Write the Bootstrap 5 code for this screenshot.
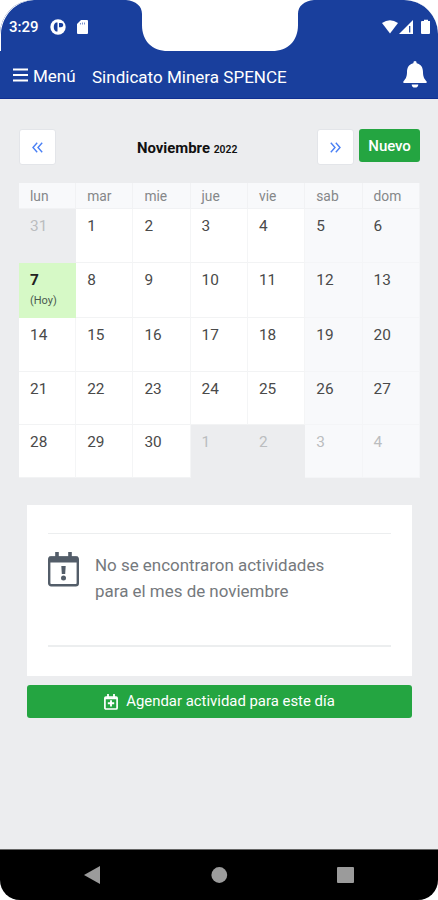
<!DOCTYPE html>
<html lang="es">
<head>
<meta charset="utf-8">
<meta name="viewport" content="width=device-width, initial-scale=1">
<title>Sindicato Minera SPENCE</title>
<link href="https://cdn.jsdelivr.net/npm/bootstrap@5.3.0/dist/css/bootstrap.min.css" rel="stylesheet">
<style>
body{font-family:Roboto,sans-serif;background:#fff;margin:0}
.phone{width:438px;height:900px;background:#ecedef;border-radius:34px 34px 20px 20px;font-size:16px}
.blue{background:#193f9d;color:#fff}
.top-shape{left:0;top:0}
.status{height:51px;padding:3px 7px 0 9px}
.clock{font-size:15px;font-weight:500;line-height:20px;width:41px}
.bar{height:48px;padding:0 11px 0 13px;border-bottom:1px solid #102f92;line-height:22px}
.menu-txt{font-size:17px;margin-left:5px;width:59px;padding-top:2px}
.title-txt{font-size:17.05px;padding-top:5px}
.tools{margin:30px 18px 0 19px;height:54px}
.pager{width:37px;height:36px;background:#fff;border:1px solid #e3e5e9;border-radius:3px;padding:0;color:#4a80f5}
.month{font-size:14.9px;font-weight:700;color:#111;line-height:36px;width:103px;margin-left:81px;margin-right:77px;padding-top:1px}
.year{font-size:10.4px;font-weight:600}
.btn-go{background:#24a541;color:#fff;border-radius:3px;border:0;padding:0}
.btn-new{width:61px;height:33px;font-size:15px;font-weight:500;letter-spacing:-.1px;padding-top:1px}
.cal{width:401px;margin-left:19px;display:grid;grid-template-columns:repeat(3,57.2px) 57.4px repeat(3,57.3px);grid-template-rows:26px 54px 55px 54px 53px 53px}
.cal>div{background:#fff;border-right:1px solid #f4f5f6;border-bottom:1px solid #f2f3f4;padding:6px 0 0 11px;font-size:15.4px;line-height:22px;color:#4a4a4a}
.cal>.wd{background:#f8f9fb;color:#858789;font-size:13.8px;padding-top:2px;border-color:#f1f2f4}
.cal>.we{background:#f8f9fb;border-color:#f4f5f7}
.cal>.out{color:#bbbdbf}
.cal>.off{background:#ecedef;border-color:#ecedef}
.cal>.now{background:#d6f9c6;color:#222;border-color:#d6f9c6}
.hoy{font-size:11px;line-height:20px;color:#4b5a50}
.panel-box{margin:27px 26px 0 27px;height:171px;background:#fff;padding:28px 21px}
.panel-in{border-top:1px solid #eceeef;border-bottom:2px solid #eceeef;height:114px;padding-top:18px}
.msg{font-size:16.95px;line-height:26px;color:#75797d;margin-left:16px}
.btn-wide{margin:9px 26px 0 27px;height:33px;font-size:14.9px}
.navkeys{height:51px;background:#000;border-top:1px solid #666}
</style>
</head>
<body>
<div class="phone position-relative overflow-hidden d-flex flex-column">
  <header class="blue">
    <svg class="top-shape position-absolute" width="438" height="52" viewBox="0 0 438 52"><path fill="#fff" d="M126 0C136 1 142 6 142 14V25C142 41 152 51 168 51H272C288 51 298 41 298 25V14C298 6 304 1 314 0Z"/><path fill="#fff" d="M0 0H34C16 1 2 15 1 34V51H0ZM438 0H408C425 3 436 15 438 30Z"/></svg>
    <div class="status d-flex align-items-center position-relative">
      <span class="clock">3:29</span>
      <svg width="16" height="16" viewBox="0 0 16 16"><circle cx="8" cy="8" r="7.7" fill="#fff"/><path d="M7.500 3.500v9H6C3 11 3 5 6 3.500zM9 4h2.200a2.100 2.100 0 0 1 0 4.200H9z" fill="#193f9d"/></svg>
      <svg class="ms-2" width="16" height="16" viewBox="0 0 16 16"><path d="M7 1h6q1 0 1 1v12q0 1-1 1H4q-1 0-1-1V5z" fill="#fff"/><path d="M6.500 4v1.500M8.500 3.500v2M10.500 3.500v2" stroke="#7890cc" stroke-width="1"/></svg>
      <svg class="ms-auto" width="50" height="18" viewBox="0 0 50 18"><path d="M1 5Q9-.5 17 5L9 15.500z" fill="#fff"/><path d="M32 2V16H18z" fill="#fff"/><path d="M28.700 8v6.500" stroke="#193f9d" stroke-width="1.200"/><path d="M41 3h2V1.800h4V3h2v12q0 1-1 1h-7q-1 0-1-1V4q0-1 1-1z" fill="#fff"/></svg>
    </div>
    <nav class="bar d-flex align-items-center">
      <svg width="15" height="16" viewBox="0 0 15 16"><path d="M0 2.500h15M0 8h15M0 13.500h15" stroke="#fff" stroke-width="1.900"/></svg>
      <span class="menu-txt">Menú</span>
      <span class="title-txt text-nowrap">Sindicato Minera SPENCE</span>
      <svg class="ms-auto" width="24" height="27" viewBox="0 0 24 27"><path fill="#fff" d="M12 0q1.700 0 1.700 2.200C18 3.200 20 6.500 20 11c0 5 1.500 7 3.500 9.300Q24.200 22 22.500 22h-21Q-.2 22 .5 20.300C2.500 18 4 16 4 11c0-4.500 2-7.800 6.300-8.800Q10.300 0 12 0zM8.700 23.400h6.600a3.300 3.100 0 0 1-6.600 0z"/></svg>
    </nav>
  </header>
  <main class="flex-grow-1">
    <div class="tools d-flex align-items-start">
      <button class="pager d-flex align-items-center justify-content-center" aria-label="Anterior"><svg width="11" height="11" viewBox="0 0 11 11" fill="none" stroke="currentColor" stroke-width="1.400"><path d="M5.200.8L1 5.500l4.200 4.700M10.200.8L6 5.500l4.200 4.700"/></svg></button>
      <div class="month text-nowrap">Noviembre <span class="year">2022</span></div>
      <button class="pager d-flex align-items-center justify-content-center" aria-label="Siguiente"><svg width="11" height="11" viewBox="0 0 11 11" fill="none" stroke="currentColor" stroke-width="1.400"><path d="M.8.8L5 5.500.8 10.200M5.800.8L10 5.500 5.800 10.200"/></svg></button>
      <button class="btn-go btn-new ms-auto">Nuevo</button>
    </div>
    <div class="cal">
      <div class="wd">lun</div><div class="wd">mar</div><div class="wd">mie</div><div class="wd">jue</div><div class="wd">vie</div><div class="wd">sab</div><div class="wd">dom</div>
      <div class="out off">31</div><div>1</div><div>2</div><div>3</div><div>4</div><div class="we">5</div><div class="we">6</div>
      <div class="now"><b>7</b><div class="hoy">(Hoy)</div></div><div>8</div><div>9</div><div>10</div><div>11</div><div class="we">12</div><div class="we">13</div>
      <div>14</div><div>15</div><div>16</div><div>17</div><div>18</div><div class="we">19</div><div class="we">20</div>
      <div>21</div><div>22</div><div>23</div><div>24</div><div>25</div><div class="we">26</div><div class="we">27</div>
      <div>28</div><div>29</div><div>30</div><div class="out off">1</div><div class="out off">2</div><div class="out we">3</div><div class="out we">4</div>
    </div>
    <section class="panel-box">
      <div class="panel-in d-flex align-items-start">
        <svg width="31" height="35" viewBox="0 0 31 35"><path d="M9 0v6M22 0v6" stroke="#535d69" stroke-width="3.600"/><rect x="1.200" y="5.500" width="28.600" height="27.800" rx="2" fill="#fff" stroke="#535d69" stroke-width="2.400"/><path d="M1.200 4.500h28.600v6H1.200z" fill="#535d69"/><path d="M13.300 14h4.400l-.5 8h-3.400z" fill="#535d69"/><circle cx="15.500" cy="26" r="2.500" fill="#535d69"/></svg>
        <div class="msg text-nowrap">No se encontraron actividades<br>para el mes de noviembre</div>
      </div>
    </section>
    <div class="d-grid"><button class="btn-go btn-wide d-flex align-items-center justify-content-center"><svg class="me-2" width="14" height="16" viewBox="0 0 14 16"><path d="M4 0v4M10 0v4" stroke="#fff" stroke-width="1.800"/><rect x=".9" y="3" width="12.200" height="12" rx="1" fill="none" stroke="#fff" stroke-width="1.700"/><path d="M1 4.300h12M3.800 9.300h6.400M7 6.200v6.200" stroke="#fff" stroke-width="1.900"/></svg><span>Agendar actividad para este día</span></button></div>
  </main>
  <footer class="navkeys">
    <svg class="d-block" width="438" height="50" viewBox="0 850 438 50" fill="#9b9b9b"><path d="M84 875l16-9v18z"/><circle cx="219.300" cy="875" r="7.900"/><rect x="337" y="867" width="17" height="16" rx="1"/></svg>
  </footer>
</div>
<script src="https://cdn.jsdelivr.net/npm/bootstrap@5.3.0/dist/js/bootstrap.bundle.min.js"></script>
</body>
</html>
